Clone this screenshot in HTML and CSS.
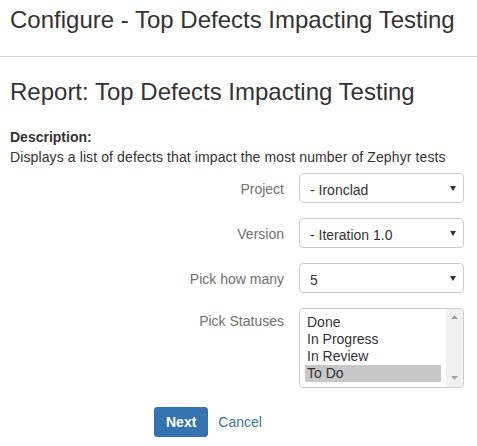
FILE: index.html
```html
<!DOCTYPE html>
<html lang="en">
<head>
<meta charset="utf-8">
<title>Configure - Top Defects Impacting Testing</title>
<link rel="stylesheet" href="styles.css">
</head>
<body>
<header class="page-header">
  <h1 class="page-title">Configure - Top Defects Impacting Testing</h1>
</header>
<main class="content">
  <h2 class="report-title">Report: Top Defects Impacting Testing</h2>
  <div class="desc">
    <div class="desc-label">Description:</div>
    <p class="desc-text">Displays a list of defects that impact the most number of Zephyr tests</p>
  </div>
  <form class="config-form">
    <div class="form-row">
      <label class="form-label">Project</label>
      <div class="select"><span class="select-value">- Ironclad</span><svg class="caret" width="6" height="5" viewBox="0 0 6 5"><polygon points="0,0 6,0 3,5" fill="#333"/></svg></div>
    </div>
    <div class="form-row">
      <label class="form-label">Version</label>
      <div class="select"><span class="select-value">- Iteration 1.0</span><svg class="caret" width="6" height="5" viewBox="0 0 6 5"><polygon points="0,0 6,0 3,5" fill="#333"/></svg></div>
    </div>
    <div class="form-row">
      <label class="form-label">Pick how many</label>
      <div class="select"><span class="select-value">5</span><svg class="caret" width="6" height="5" viewBox="0 0 6 5"><polygon points="0,0 6,0 3,5" fill="#333"/></svg></div>
    </div>
    <div class="form-row form-row--multi">
      <label class="form-label form-label--top">Pick Statuses</label>
      <div class="listbox">
        <ul class="options">
          <li class="option">Done</li>
          <li class="option">In Progress</li>
          <li class="option">In Review</li>
          <li class="option is-selected">To Do</li>
        </ul>
        <div class="scrollbar">
          <svg class="sb-arrow" width="7" height="4" viewBox="0 0 7 4"><polygon points="0,4 7,4 3.5,0" fill="#a3a3a3"/></svg>
          <svg class="sb-arrow" width="7" height="4" viewBox="0 0 7 4"><polygon points="0,0 7,0 3.5,4" fill="#a3a3a3"/></svg>
        </div>
      </div>
    </div>
    <div class="actions">
      <button type="button" class="btn-primary">Next</button>
      <a class="cancel-link" href="#">Cancel</a>
    </div>
  </form>
</main>
</body>
</html>
```

FILE: styles.css
```css
* { box-sizing: border-box; }

html, body {
  margin: 0;
  padding: 0;
  background: #fff;
}

body {
  font-family: "Liberation Sans", Arial, sans-serif;
  font-size: 14px;
  line-height: 20px;
  color: #333;
}

.page-header {
  padding: 7px 10px 23px;
  border-bottom: 1px solid #d5d5d5;
}

.page-title {
  margin: 0;
  font-size: 24px;
  line-height: 26px;
  font-weight: normal;
  color: #333;
}

.content {
  padding: 0 10px;
}

.report-title {
  margin: 22px 0 0;
  font-size: 24px;
  line-height: 26px;
  font-weight: normal;
  color: #333;
}

.desc {
  margin-top: 22px;
}

.desc-label {
  font-weight: bold;
  color: #333;
}

.desc-text {
  margin: 0;
  color: #333;
  letter-spacing: 0.11px;
}

.config-form {
  margin-top: 6px;
}

.form-row {
  display: flex;
  align-items: flex-start;
  margin-bottom: 15px;
}

.form-row--multi {
  margin-top: 1px;
  margin-bottom: 0;
}

.form-label {
  width: 274px;
  margin-right: 15px;
  padding-top: 6px;
  text-align: right;
  color: #707070;
}

.form-label--top {
  padding-top: 3px;
}

.select {
  width: 165px;
  height: 30px;
  padding: 6px 7px 2px 10px;
  border: 1px solid #ccc;
  border-radius: 4px;
  background: #fff;
  display: flex;
  justify-content: space-between;
  align-items: center;
  color: #333;
}

.select-value {
  line-height: 20px;
}

.caret {
  display: block;
  margin-top: -3px;
}

.listbox {
  width: 165px;
  height: 80px;
  border: 1px solid #ccc;
  border-radius: 4px;
  overflow: hidden;
  display: flex;
  background: #fff;
}

.options {
  list-style: none;
  margin: 0;
  padding: 5px 5px 4px;
  flex: 1;
}

.option {
  line-height: 17px;
  height: 17px;
  padding-left: 2px;
  color: #333;
}

.option.is-selected {
  background: #c8c8c8;
}

.scrollbar {
  width: 17px;
  background: #f1f1f1;
  display: flex;
  flex-direction: column;
  justify-content: space-between;
  align-items: center;
  padding: 6px 0 7px;
}

.sb-arrow {
  display: block;
}

.actions {
  margin-top: 19px;
  padding-left: 144px;
  display: flex;
  align-items: center;
}

.btn-primary {
  height: 30px;
  padding: 0 11px;
  border: 1px solid #3572b0;
  border-radius: 3px;
  background: #3572b0;
  color: #fff;
  font-family: "Liberation Sans", Arial, sans-serif;
  font-size: 14px;
  font-weight: bold;
  line-height: 20px;
}

.cancel-link {
  margin-left: 10px;
  color: #3b73af;
  text-decoration: none;
}
```
